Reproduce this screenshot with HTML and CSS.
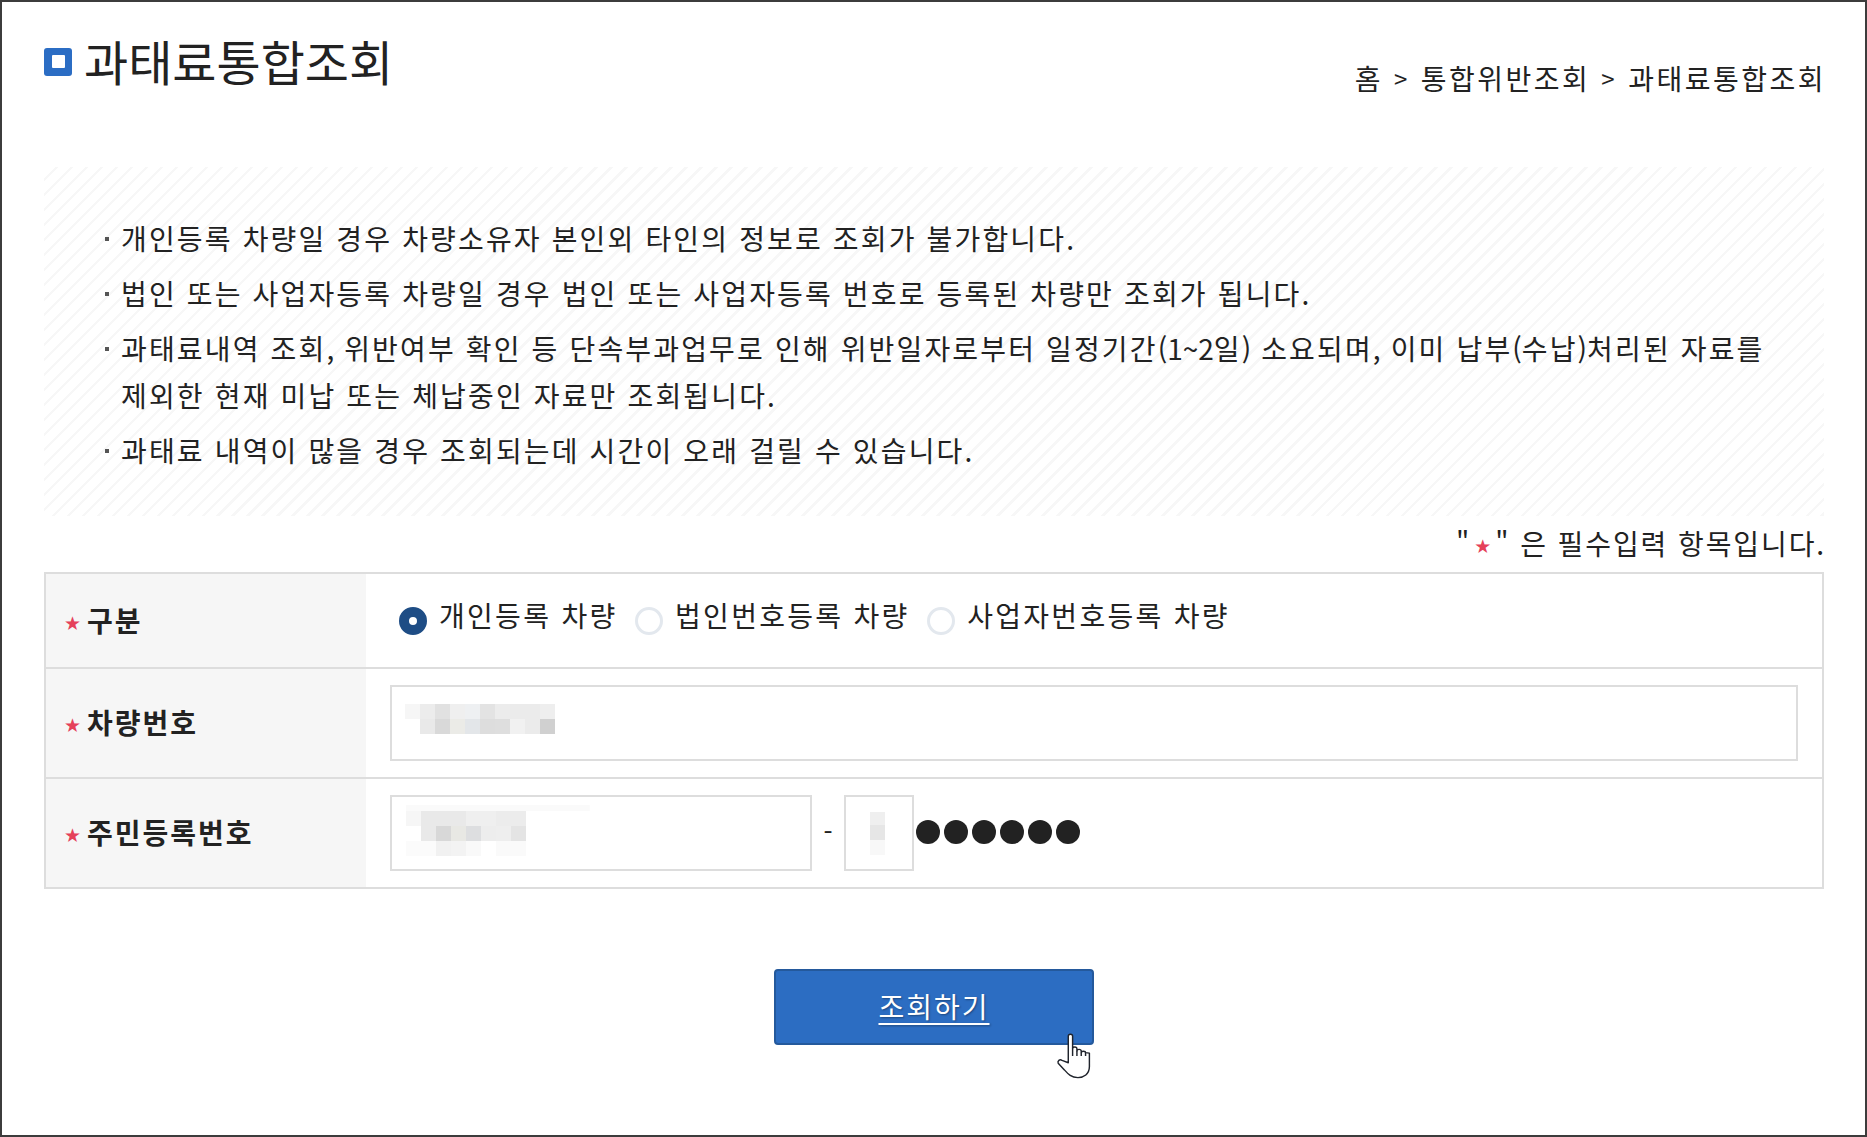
FILE: index.html
```html
<!DOCTYPE html>
<html lang="ko">
<head>
<meta charset="utf-8">
<title>과태료통합조회</title>
<link rel="stylesheet" href="styles.css">
</head>
<body>
<main class="page">
  <header class="head">
    <h1 class="title"><span class="title-icon"><span class="title-hole"></span></span>과태료통합조회</h1>
    <nav class="crumbs"><span>홈</span><span class="sep">&gt;</span><span>통합위반조회</span><span class="sep">&gt;</span><span>과태료통합조회</span></nav>
  </header>
  <section class="notice">
    <ul class="notes">
      <li>개인등록 차량일 경우 차량소유자 본인외 타인의 정보로 조회가 불가합니다.</li>
      <li>법인 또는 사업자등록 차량일 경우 법인 또는 사업자등록 번호로 등록된 차량만 조회가 됩니다.</li>
      <li>과태료내역 조회<span class="narrow">,</span> 위반여부 확인 등 단속부과업무로 인해 위반일자로부터 일정기간<span class="narrow">(1~2</span>일<span class="narrow">)</span> 소요되며<span class="narrow">,</span> 이미 납부<span class="narrow">(</span>수납<span class="narrow">)</span>처리된 자료를 제외한 현재 미납 또는 체납중인 자료만 조회됩니다.</li>
      <li>과태료 내역이 많을 경우 조회되는데 시간이 오래 걸릴 수 있습니다.</li>
    </ul>
  </section>
  <p class="required">"<span class="star">★</span>" 은 필수입력 항목입니다.</p>
  <div class="form">
    <div class="row row-type">
      <div class="label"><span class="star">★</span>구분</div>
      <div class="field radios">
        <span class="radio-item"><span class="radio on"></span><span class="radio-text">개인등록 차량</span></span>
        <span class="radio-item"><span class="radio"></span><span class="radio-text">법인번호등록 차량</span></span>
        <span class="radio-item"><span class="radio"></span><span class="radio-text">사업자번호등록 차량</span></span>
      </div>
    </div>
    <div class="row row-car">
      <div class="label"><span class="star">★</span>차량번호</div>
      <div class="field">
        <div class="input input-full">
          <svg class="mosaic mosaic-car" width="200" height="34" viewBox="0 0 160 34" preserveAspectRatio="none">
            <rect x="0" y="0" width="12" height="15" fill="#f6f6f6"/><rect x="12" y="0" width="12" height="15" fill="#ececec"/><rect x="24" y="0" width="12" height="15" fill="#e1e1e1"/><rect x="36" y="0" width="12" height="15" fill="#efefef"/><rect x="48" y="0" width="12" height="15" fill="#eef0f2"/><rect x="60" y="0" width="12" height="15" fill="#e3e3e3"/><rect x="72" y="0" width="12" height="15" fill="#ececec"/><rect x="84" y="0" width="24" height="15" fill="#ebebeb"/><rect x="108" y="0" width="12" height="15" fill="#eeeeee"/>
            <rect x="12" y="15" width="12" height="15" fill="#e9e9e9"/><rect x="24" y="15" width="12" height="15" fill="#d9d9d9"/><rect x="36" y="15" width="12" height="15" fill="#ebebe7"/><rect x="48" y="15" width="12" height="15" fill="#e3e6e9"/><rect x="60" y="15" width="12" height="15" fill="#dddddd"/><rect x="72" y="15" width="12" height="15" fill="#dedede"/><rect x="84" y="15" width="12" height="15" fill="#f1f1f1"/><rect x="96" y="15" width="12" height="15" fill="#ebebeb"/><rect x="108" y="15" width="12" height="15" fill="#d0d0d0"/>
          </svg>
        </div>
      </div>
    </div>
    <div class="row row-id">
      <div class="label"><span class="star">★</span>주민등록번호</div>
      <div class="field id-field">
        <div class="input input-front">
          <svg class="mosaic mosaic-front" width="200" height="51" viewBox="0 0 160 51" preserveAspectRatio="none">
            <rect x="0" y="0" width="147" height="6" fill="#fafafa"/>
            <rect x="0" y="6" width="12" height="15" fill="#f6f6f6"/><rect x="12" y="6" width="36" height="15" fill="#e9e9e9"/><rect x="48" y="6" width="12" height="15" fill="#efefef"/><rect x="60" y="6" width="12" height="15" fill="#efefef"/><rect x="72" y="6" width="24" height="15" fill="#ececec"/>
            <rect x="12" y="21" width="12" height="15" fill="#e9e9e9"/><rect x="24" y="21" width="12" height="15" fill="#d8d8d8"/><rect x="36" y="21" width="12" height="15" fill="#e8e8e4"/><rect x="48" y="21" width="12" height="15" fill="#dddee0"/><rect x="60" y="21" width="12" height="15" fill="#ededed"/><rect x="72" y="21" width="12" height="15" fill="#eeeeee"/><rect x="84" y="21" width="12" height="15" fill="#e4e4e4"/>
            <rect x="0" y="36" width="24" height="15" fill="#fbfbfb"/><rect x="24" y="36" width="12" height="15" fill="#f1f1f1"/><rect x="36" y="36" width="12" height="15" fill="#f3f3f3"/><rect x="48" y="36" width="12" height="15" fill="#f9f9f9"/><rect x="72" y="36" width="24" height="15" fill="#fafafa"/>
          </svg>
        </div>
        <span class="dash">-</span>
        <div class="input input-back">
          <svg class="mosaic mosaic-back" width="15" height="43" viewBox="0 0 15 43">
            <rect x="0" y="0" width="15" height="13" fill="#efefef"/><rect x="0" y="13" width="15" height="15" fill="#e6e6e6"/><rect x="0" y="28" width="15" height="15" fill="#f8f8f8"/>
          </svg>
        </div>
        <span class="dots"><i></i><i></i><i></i><i></i><i></i><i></i></span>
      </div>
    </div>
  </div>
  <div class="actions">
    <a class="btn" href="#">조회하기
      <svg class="cursor" width="38" height="48" viewBox="0 0 38 50">
        <path d="M12 32V4.500C12 1.500 16.500 1.500 16.500 4.500V17.500C16.500 15 21 15 21 17.500V20C21 17.500 25.500 17.500 25.500 20V21.500C25.500 19.500 30 19.500 30 21.500L34 22V36C34 44 28 47.500 22 47.500C15 47.500 12 44 8 39.500L1.500 32.500C0.500 30 3 28 5.500 29.500Z" fill="#fff" stroke="#20242c" stroke-width="1.500" stroke-linejoin="round"/>
        <path d="M16.500 17.500V25M21 20V25M25.500 21.500V25M30 21.500V25" fill="none" stroke="#20242c" stroke-width="1.500"/>
      </svg>
    </a>
  </div>
</main>
</body>
</html>
```

FILE: styles.css
```css
* { box-sizing: border-box; }
html, body { margin: 0; padding: 0; }
body {
  background: #fff;
  color: #222;
  font-family: "Noto Sans CJK KR", "Noto Sans", sans-serif;
}
.page {
  width: 1867px;
  height: 1137px;
  border: 2px solid #3c3c3c;
  padding: 0 41px 0 42px;
  overflow: hidden;
}
.head {
  height: 165px;
  display: flex;
  justify-content: space-between;
  align-items: flex-start;
}
.title {
  margin: 26px 0 0;
  display: flex;
  align-items: center;
  font-size: 48px;
  line-height: 64px;
  font-weight: 400;
  letter-spacing: 0;
}
.title-icon {
  width: 28px;
  height: 28px;
  margin: 3px 12px 0 0;
  border-radius: 3px;
  background: #2b6dc4;
  display: flex;
  align-items: center;
  justify-content: center;
}
.title-hole { width: 13px; height: 13px; background: #fff; border-radius: 1px; }
.crumbs {
  margin: 56px -2px 0 0;
  font-size: 28px;
  letter-spacing: 2.5px;
  line-height: 40px;
  display: flex;
  gap: 11px;
}
.sep { font-size: 24px; }
.notice {
  height: 349px;
  background: repeating-linear-gradient(135deg, #fff 0 8px, #f7f7f7 8px 10.6px);
  padding: 48px 40px 0 60px;
}
.notes { list-style: none; margin: 0; padding: 0; word-break: keep-all; }
.notes li {
  position: relative;
  padding-left: 17px;
  margin-bottom: 8px;
  font-size: 28px;
  letter-spacing: 2.15px;
  line-height: 47px;
}
.notes li::before {
  content: "";
  position: absolute;
  left: 1px;
  top: 22px;
  width: 4px;
  height: 4px;
  background: #555;
}
.narrow { letter-spacing: 0; }
.required {
  margin: 0 -2px 0 0;
  height: 56px;
  text-align: right;
  font-size: 28px;
  letter-spacing: 1.9px;
  line-height: 54px;
}
.star {
  font-family: "DejaVu Sans", sans-serif;
  color: #e5405a;
  font-size: 19px;
  letter-spacing: 0;
}
.required .star { margin: 0 4px 0 3px; position: relative; top: -2px; }
.form { border: 2px solid #ddd; }
.row { display: flex; border-top: 2px solid #ddd; }
.row:first-child { border-top: 0; }
.row-type { height: 93px; }
.row-car { height: 110px; }
.row-id { height: 110px; }
.label {
  width: 320px;
  flex: none;
  background: #f6f6f6;
  padding: 0 0 2px 18px;
  display: flex;
  align-items: center;
  font-size: 28px;
  letter-spacing: 2px;
  font-weight: 700;
}
.label .star { margin: 6px 6px 0 0; }
.field {
  flex: 1;
  display: flex;
  align-items: center;
  padding: 0 24px;
}
.radios { padding-left: 33px; padding-bottom: 6px; }
.radio-item { display: flex; align-items: center; margin-right: 17.500px; }
.radio {
  width: 28px;
  height: 28px;
  border-radius: 50%;
  border: 3px solid #e3e8ee;
  margin: 6px 12px 0 0;
}
.radio.on { border: 10px solid #1e4d85; }
.radio-text { font-size: 28px; letter-spacing: 2.3px; line-height: 40px; margin-top: -6px; }
.input {
  height: 76px;
  border: 2px solid #ddd;
  background: #fff;
  overflow: hidden;
}
.input-full { width: 100%; }
.input-front { width: 422px; }
.input-back { width: 70px; }
.mosaic { display: block; }
.mosaic-car { margin: 17px 0 0 13px; }
.mosaic-front { margin: 8px 0 0 14px; }
.mosaic-back { margin: 15px 0 0 24px; }
.dash { width: 32px; text-align: center; font-size: 26px; line-height: 30px; margin-top: -4px; }
.dots { display: flex; gap: 4px; margin: -2px 0 0 2px; }
.dots i { width: 24px; height: 24px; border-radius: 50%; background: #222; }
.actions { display: flex; justify-content: center; padding-top: 80px; }
.btn {
  position: relative;
  width: 320px;
  height: 76px;
  border: 2px solid #24599c;
  border-radius: 4px;
  background: #2c6dc2;
  color: #fff;
  font-size: 28px;
  letter-spacing: 2px;
  line-height: 70px;
  text-align: center;
  text-decoration: underline;
  text-underline-offset: 5px;
  text-shadow: 1px 1px 2px rgba(0,0,0,.35);
}
.cursor { position: absolute; left: 280px; top: 61px; }
```
